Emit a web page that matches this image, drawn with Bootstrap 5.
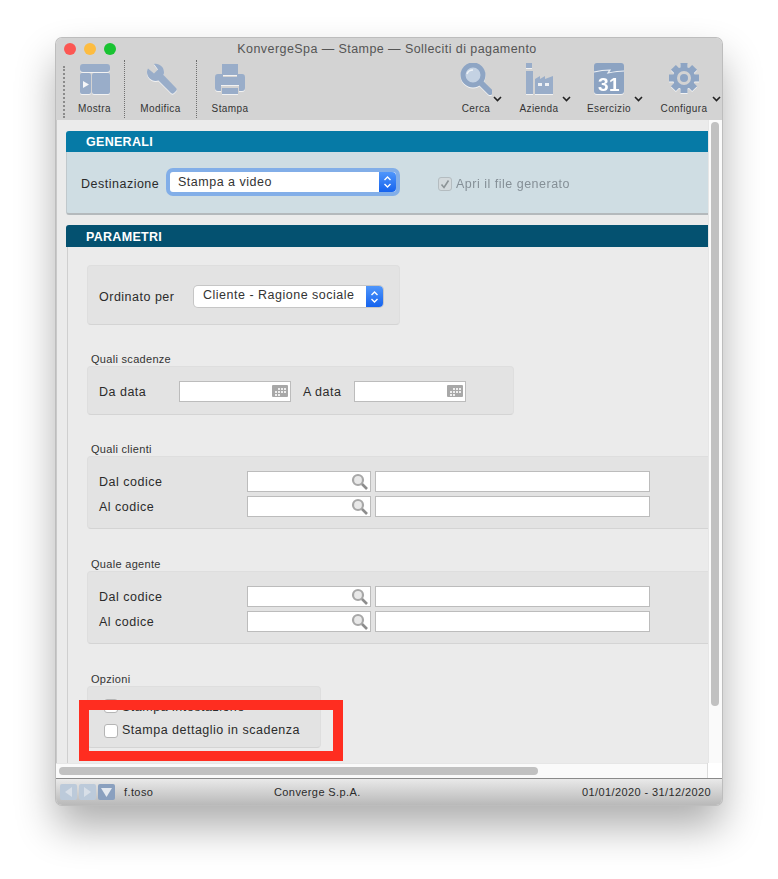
<!DOCTYPE html>
<html lang="en">
  <head>
    <meta charset="UTF-8" />
    <meta name="viewport" content="width=device-width, initial-scale=1.0" />
    <title>Solleciti di pagamento</title>
    <link href="https://cdn.jsdelivr.net/npm/bootstrap@5.3.0/dist/css/bootstrap.min.css" rel="stylesheet" />
    <style>
      body {
        background: #fff;
        font-family: "Liberation Sans", Arial, sans-serif;
        font-size: 12.5px;
        color: #2b2b2b;
        overflow: hidden;
        height: 879px;
      }
      .app-window {
        width: 666px;
        height: 767px;
        margin: 38px 0 0 56px;
        border-radius: 6px;
        box-shadow: 0 0 0 1px #bdbdbd, 0 22px 40px rgba(0, 0, 0, 0.32);
        background: #ebebeb;
      }
      .app-head {
        height: 82px;
        background: #d3d3d3;
        border-radius: 6px 6px 0 0;
      }
      .title-row {
        height: 22px;
        padding: 0 12px 0 8px;
        color: #555;
        font-size: 12.5px;
        letter-spacing: 0.43px;
      }
      .light { width: 12px; height: 12px; border-radius: 50%; }
      .light-red { background: #fc5753; }
      .light-yellow { background: #fdbc40; }
      .light-green { background: #19c332; }
      .lights { position: absolute; left: 8px; top: 5px; }
      .tool-row { height: 60px; }
      .tool-item {
        height: 58px;
        color: #333;
        font-size: 10px;
        letter-spacing: 0.4px;
        text-align: center;
      }
      .tool-item svg { display: block; margin: 3px auto 6px; filter: drop-shadow(0 1px 0 rgba(255, 255, 255, 0.7)); }
      .tool-sep { border-right: 1px dotted #6f6f6f; }
      .tool-grip { width: 9px; margin-top: 6px; height: 52px; border-right: 2px dotted #8b8b8b; }
      .tool-mostra { width: 60px; }
      .tool-modifica { width: 72px; }
      .tool-stampa { width: 66px; }
      .tool-cerca { width: 60px; }
      .tool-azienda { width: 66px; }
      .tool-esercizio { width: 74px; }
      .tool-configura { width: 76px; }
      .menu-chev { position: absolute; top: 36px; width: 9px; height: 6px; filter: none !important; margin: 0 !important; }
      .app-body { height: 658px; }
      .app-main { width: 652px; height: 643px; background: #ebebeb; border-left: 1px solid #c9c9c9; }
      .vscroll { width: 14px; height: 643px; background: #fafafa; border-left: 1px solid #e6e6e6; padding: 2px 0 0 2px; }
      .vthumb { width: 8px; height: 584px; border-radius: 4px; background: #c1c1c1; }
      .hscroll { height: 15px; background: #fafafa; border-top: 1px solid #e6e6e6; padding: 3px 0 0 3px; }
      .hthumb { width: 479px; height: 8px; border-radius: 4px; background: #c1c1c1; }
      .hcorner { width: 15px; height: 15px; margin-top: -4px; background: #fff; border-left: 1px solid #dcdcdc; }
      .panel-box { width: 680px; margin-left: 9px; flex-shrink: 0; }
      .panel-generali { margin-top: 11px; }
      .panel-parametri { margin-top: 10px; }
      .panel-title {
        height: 21px;
        padding: 1px 0 0 20px;
        color: #fff;
        font-weight: 700;
        font-size: 12.5px;
        line-height: 21px;
        letter-spacing: 0.3px;
        border-radius: 3px 3px 0 0;
      }
      .title-gen { background: #067aa6; }
      .title-par { background: #045170; height: 22px; line-height: 22px; }
      .panel-gen-body {
        height: 63px;
        padding: 20px 0 0 14px;
        background: #cfdde3;
        border: 1px solid #c0c8cc;
        border-top: 0;
        border-bottom: 2px solid #b4b9bc;
        border-radius: 0 0 3px 3px;
      }
      .panel-par-body { padding: 18px 0 0 19px; margin-left: 1px; border-left: 1px solid #cfcfcf; height: 560px; }
      .field-text { font-size: 12.5px; letter-spacing: 0.5px; color: #2b2b2b; }
      .label-top { margin-top: 2px; }
      .label-dest { width: 89px; margin-top: 3px; flex-shrink: 0; }
      .label-ordinato { width: 95px; }
      .label-first { margin-top: 4px; }
      .mac-select {
        height: 21px;
        background: #fff;
        border-radius: 4px;
        box-shadow: 0 0 0 1px #c6c6c6;
        padding-left: 9px;
        font-size: 12.5px;
        letter-spacing: 0.5px;
        line-height: 20px;
        color: #333;
      }
      .mac-select-focus { width: 226px; height: 20px; padding-left: 8px; flex-shrink: 0; box-shadow: 0 0 0 4px #82aee8; border-radius: 3px; }
      .mac-select-plain { width: 189px; line-height: 18px; }
      .sel-arrow {
        width: 17px;
        height: 100%;
        background: linear-gradient(#4f96fb, #1563ee);
        border-radius: 0 4px 4px 0;
      }
      .check-disabled { margin: 3px 0 0 42px; }
      .check-box {
        width: 14px;
        height: 14px;
        flex-shrink: 0;
        background: #fff;
        border: 1px solid #b5b5b5;
        border-radius: 3px;
      }
      .check-on { background: #d3d9dc; border-color: #b4bcc0; color: #8c9396; }
      .group-box { background: #e3e3e3; border: 1px solid #dedede; border-bottom-color: #d4d4d4; border-radius: 4px; }
      .group-ordinato { width: 313px; height: 60px; padding: 20px 0 0 11px; }
      .group-caption { font-size: 11px; letter-spacing: 0.3px; color: #333; margin-left: 4px; height: 14px; line-height: 14px; }
      .cap-scadenze { margin-top: 27px; }
      .cap-clienti { margin-top: 27px; }
      .cap-agente { margin-top: 28px; }
      .cap-opzioni { margin-top: 28px; }
      .group-scadenze { width: 427px; height: 49px; margin-top: 0; padding: 14px 0 0 11px; }
      .group-code { width: 660px; height: 73px; padding: 14px 0 0 11px; }
      .code-row { height: 25px; }
      .code-row .row-label { width: 148px; }
      .date-input, .code-input, .name-input {
        position: relative;
        background: #fff;
        border: 1px solid #bcbcbc;
        height: 21px;
      }
      .date-input { width: 112px; }
      .date-input svg { position: absolute; right: 2px; top: 3px; }
      .code-input { width: 124px; }
      .code-input svg { position: absolute; right: 1px; top: 1px; }
      .name-input { width: 275px; margin-left: 4px; }
      .date-label-a { width: 63px; padding-left: 12px; }
      .date-label-da { width: 80px; }
      .group-opzioni { width: 234px; height: 62px; padding: 6px 0 0 16px; }
      .opt-row { height: 25px; gap: 4px; }
      .red-frame { position: absolute; left: 23px; top: 662px; width: 264px; height: 61px; border: 10px solid #ff2d20; }
      .status-bar {
        height: 27px;
        padding: 0 11px 0 4px;
        background: linear-gradient(#e9e9e9, #b9b9b9);
        border-top: 1px solid #8a8a8a;
        border-radius: 0 0 6px 6px;
        font-size: 11px;
        letter-spacing: 0.4px;
        color: #2b2b2b;
      }
      .nav-btn { width: 17px; height: 16px; margin-right: 2px; border-radius: 2px; background: #bccada; }
      .nav-btn-on { background: #8aa0bf; }
      .status-user { margin-left: 7px; width: 150px; }
      .status-company { width: 150px; }
    </style>
  </head>
  <body>
    <div class="app-window position-relative d-flex flex-column">
      <div class="app-head flex-shrink-0">
        <div class="title-row position-relative d-flex align-items-center justify-content-center">
          <div class="lights d-flex gap-2">
            <span class="light light-red"></span>
            <span class="light light-yellow"></span>
            <span class="light light-green"></span>
          </div>
          KonvergeSpa — Stampe — Solleciti di pagamento
        </div>
        <div class="tool-row d-flex">
          <div class="tool-grip"></div>
          <div class="tool-item tool-mostra tool-sep">
            <svg width="32" height="32" viewBox="0 0 32 32" fill="#99adc9">
              <rect x="1" y="1" width="30" height="8" rx="3" />
              <rect x="1" y="10" width="11" height="21" rx="2" />
              <rect x="13" y="10" width="18" height="21" rx="2" />
              <path d="M4 18l6 3.5-6 3.5z" fill="#f6f7f9" />
            </svg>
            Mostra
          </div>
          <div class="tool-item tool-modifica tool-sep">
            <svg width="32" height="32" viewBox="0 0 32 32" fill="#99adc9">
              <path d="M9 1c5-1 10 3 10 8 0 1 0 2-.5 3L31 25c1 1 1 2 0 3l-2 2c-1 1-2 1-3 0L13.500 17.500c-6 2-12-3-11.500-9 0-1 .5-2 1-3l6 5 4-4z" />
            </svg>
            Modifica
          </div>
          <div class="tool-item tool-stampa">
            <svg width="32" height="32" viewBox="0 0 32 32" fill="#99adc9">
              <rect x="8" y="1" width="16" height="11" />
              <path d="M4 11h5v3h14v-3h5c2 0 3 1 3 3v11c0 2-1 3-3 3h-3v-6H7v6H4c-2 0-3-1-3-3V14c0-2 1-3 3-3z" />
              <rect x="8" y="25" width="16" height="6" />
            </svg>
            Stampa
          </div>
          <div class="flex-grow-1"></div>
          <div class="tool-item tool-cerca position-relative">
            <svg width="32" height="32" viewBox="0 0 32 32" fill="none">
              <circle cx="13" cy="12" r="10" fill="#c4d2e3" stroke="#8ea5c4" stroke-width="5" />
              <path d="M22 21l8 8" stroke="#8ea5c4" stroke-width="6" stroke-linecap="round" />
              <path d="M7 11c1-3 3-4 6-4" stroke="#eef3f8" stroke-width="1.500" />
            </svg>
            Cerca
            <svg class="menu-chev" style="left: 47px" viewBox="0 0 9 6" fill="none"><path d="M1 1l3.500 3.500L8 1" stroke="#222" stroke-width="1.600" /></svg>
          </div>
          <div class="tool-item tool-azienda position-relative">
            <svg width="32" height="32" viewBox="0 0 32 32" fill="#99adc9">
              <rect x="3" y="0" width="6" height="5" />
              <rect x="3" y="8" width="7" height="23" />
              <path d="M12 16l5-3v3l5-3v3l8-3v18H12z" />
              <rect x="15" y="20" width="4" height="3" fill="#eef1f5" />
              <rect x="22" y="20" width="4" height="3" fill="#eef1f5" />
            </svg>
            Azienda
            <svg class="menu-chev" style="left: 56px" viewBox="0 0 9 6" fill="none"><path d="M1 1l3.500 3.500L8 1" stroke="#222" stroke-width="1.600" /></svg>
          </div>
          <div class="tool-item tool-esercizio position-relative">
            <svg width="32" height="32" viewBox="0 0 32 32">
              <rect x="1" y="0" width="30" height="31" rx="3" fill="#8ca3c2" />
              <path d="M1 9c8-2 12-2 16-2l-2 3c5-1 11-2 16-2" fill="none" stroke="#eef1f5" stroke-width="1.200" />
              <text x="16" y="28" text-anchor="middle" fill="#fff" font-family="Liberation Sans, sans-serif" font-weight="700" font-size="19">31</text>
            </svg>
            Esercizio
            <svg class="menu-chev" style="left: 62px" viewBox="0 0 9 6" fill="none"><path d="M1 1l3.500 3.500L8 1" stroke="#222" stroke-width="1.600" /></svg>
          </div>
          <div class="tool-item tool-configura position-relative">
            <svg width="32" height="32" viewBox="0 0 32 32" fill="#8ea5c4">
              <g transform="translate(16 15)">
                <rect x="-3.500" y="-15" width="7" height="30" />
                <rect x="-3.500" y="-15" width="7" height="30" transform="rotate(45)" />
                <rect x="-3.500" y="-15" width="7" height="30" transform="rotate(90)" />
                <rect x="-3.500" y="-15" width="7" height="30" transform="rotate(135)" />
                <circle r="11" />
                <circle r="7" fill="#d3d3d3" />
                <circle r="4" fill="#8ea5c4" />
              </g>
            </svg>
            Configura
            <svg class="menu-chev" style="left: 66px" viewBox="0 0 9 6" fill="none"><path d="M1 1l3.500 3.500L8 1" stroke="#222" stroke-width="1.600" /></svg>
          </div>
        </div>
      </div>

      <div class="app-body d-flex flex-column flex-shrink-0">
        <div class="d-flex">
          <div class="app-main overflow-hidden">
            <div class="panel-box panel-generali">
              <div class="panel-title title-gen">GENERALI</div>
              <div class="panel-gen-body d-flex">
                <span class="field-text label-dest">Destinazione</span>
                <div class="mac-select mac-select-focus d-flex justify-content-between">
                  <span>Stampa a video</span>
                  <span class="sel-arrow d-flex align-items-center justify-content-center">
                    <svg width="9" height="14" viewBox="0 0 9 14" fill="none" stroke="#fff" stroke-width="1.400"><path d="M1.500 5l3-3 3 3M1.500 9l3 3 3-3" /></svg>
                  </span>
                </div>
                <div class="check-disabled d-flex align-items-center gap-1 align-self-start">
                  <span class="check-box check-on d-flex align-items-center justify-content-center">
                    <svg width="10" height="10" viewBox="0 0 10 10" fill="none" stroke="#8c9396" stroke-width="1.600"><path d="M1.500 5.500l2.500 3 4.500-7" /></svg>
                  </span>
                  <span class="field-text text-secondary opacity-75">Apri il file generato</span>
                </div>
              </div>
            </div>

            <div class="panel-box panel-parametri">
              <div class="panel-title title-par">PARAMETRI</div>
              <div class="panel-par-body">
                <div class="group-box group-ordinato d-flex">
                  <span class="field-text label-ordinato label-top">Ordinato per</span>
                  <div class="mac-select mac-select-plain d-flex justify-content-between">
                    <span>Cliente - Ragione sociale</span>
                    <span class="sel-arrow d-flex align-items-center justify-content-center">
                      <svg width="9" height="14" viewBox="0 0 9 14" fill="none" stroke="#fff" stroke-width="1.400"><path d="M1.500 5l3-3 3 3M1.500 9l3 3 3-3" /></svg>
                    </span>
                  </div>
                </div>

                <div class="group-caption cap-scadenze">Quali scadenze</div>
                <div class="group-box group-scadenze d-flex">
                  <span class="field-text date-label-da label-top">Da data</span>
                  <div class="date-input">
                    <svg width="16" height="12" viewBox="0 0 16 12"><rect width="16" height="12" rx="1" fill="#a8a8a8" /><path d="M6 3h2v2H6zM9 3h2v2H9zM12 3h2v2h-2zM3 6h2v2H3zM6 6h2v2H6zM9 6h2v2H9zM12 6h2v2h-2zM3 9h2v2H3zM6 9h2v2H6z" fill="#eee" /></svg>
                  </div>
                  <span class="field-text date-label-a label-top">A data</span>
                  <div class="date-input">
                    <svg width="16" height="12" viewBox="0 0 16 12"><rect width="16" height="12" rx="1" fill="#a8a8a8" /><path d="M6 3h2v2H6zM9 3h2v2H9zM12 3h2v2h-2zM3 6h2v2H3zM6 6h2v2H6zM9 6h2v2H9zM12 6h2v2h-2zM3 9h2v2H3zM6 9h2v2H6z" fill="#eee" /></svg>
                  </div>
                </div>

                <div class="group-caption cap-clienti">Quali clienti</div>
                <div class="group-box group-code">
                  <div class="code-row d-flex">
                    <span class="field-text row-label label-top">Dal codice</span>
                    <div class="code-input"><svg width="18" height="18" viewBox="0 0 18 18" fill="none"><circle cx="7" cy="7" r="5" fill="#e9e9e9" stroke="#a8a8a8" stroke-width="2.200" /><path d="M11 11l5 5" stroke="#8d8d8d" stroke-width="2.600" /></svg></div>
                    <div class="name-input"></div>
                  </div>
                  <div class="code-row d-flex">
                    <span class="field-text row-label label-top">Al codice</span>
                    <div class="code-input"><svg width="18" height="18" viewBox="0 0 18 18" fill="none"><circle cx="7" cy="7" r="5" fill="#e9e9e9" stroke="#a8a8a8" stroke-width="2.200" /><path d="M11 11l5 5" stroke="#8d8d8d" stroke-width="2.600" /></svg></div>
                    <div class="name-input"></div>
                  </div>
                </div>

                <div class="group-caption cap-agente">Quale agente</div>
                <div class="group-box group-code">
                  <div class="code-row d-flex">
                    <span class="field-text row-label label-top">Dal codice</span>
                    <div class="code-input"><svg width="18" height="18" viewBox="0 0 18 18" fill="none"><circle cx="7" cy="7" r="5" fill="#e9e9e9" stroke="#a8a8a8" stroke-width="2.200" /><path d="M11 11l5 5" stroke="#8d8d8d" stroke-width="2.600" /></svg></div>
                    <div class="name-input"></div>
                  </div>
                  <div class="code-row d-flex">
                    <span class="field-text row-label label-top">Al codice</span>
                    <div class="code-input"><svg width="18" height="18" viewBox="0 0 18 18" fill="none"><circle cx="7" cy="7" r="5" fill="#e9e9e9" stroke="#a8a8a8" stroke-width="2.200" /><path d="M11 11l5 5" stroke="#8d8d8d" stroke-width="2.600" /></svg></div>
                    <div class="name-input"></div>
                  </div>
                </div>

                <div class="group-caption cap-opzioni">Opzioni</div>
                <div class="group-box group-opzioni">
                  <div class="opt-row d-flex align-items-center">
                    <span class="check-box"></span>
                    <span class="field-text label-first">Stampa intestazione</span>
                  </div>
                  <div class="opt-row d-flex align-items-center">
                    <span class="check-box"></span>
                    <span class="field-text">Stampa dettaglio in scadenza</span>
                  </div>
                </div>
              </div>
            </div>
          </div>
          <div class="vscroll"><div class="vthumb"></div></div>
        </div>
        <div class="hscroll d-flex justify-content-between">
          <div class="hthumb"></div>
          <div class="hcorner"></div>
        </div>
      </div>

      <div class="status-bar d-flex align-items-center flex-shrink-0">
        <span class="nav-btn d-flex align-items-center justify-content-center">
          <svg width="9" height="10" viewBox="0 0 9 10" fill="#d8dfe8"><path d="M8 0v10L1 5z" /></svg>
        </span>
        <span class="nav-btn d-flex align-items-center justify-content-center">
          <svg width="9" height="10" viewBox="0 0 9 10" fill="#d8dfe8"><path d="M1 0v10l7-5z" /></svg>
        </span>
        <span class="nav-btn nav-btn-on d-flex align-items-center justify-content-center">
          <svg width="11" height="9" viewBox="0 0 11 9" fill="#e4e9f0"><path d="M0 0h11L5.500 9z" /></svg>
        </span>
        <span class="status-user">f.toso</span>
        <span class="status-company">Converge S.p.A.</span>
        <span class="ms-auto">01/01/2020 - 31/12/2020</span>
      </div>

      <div class="red-frame"></div>
    </div>

    <script src="https://cdn.jsdelivr.net/npm/bootstrap@5.3.0/dist/js/bootstrap.bundle.min.js"></script>
  </body>
</html>
